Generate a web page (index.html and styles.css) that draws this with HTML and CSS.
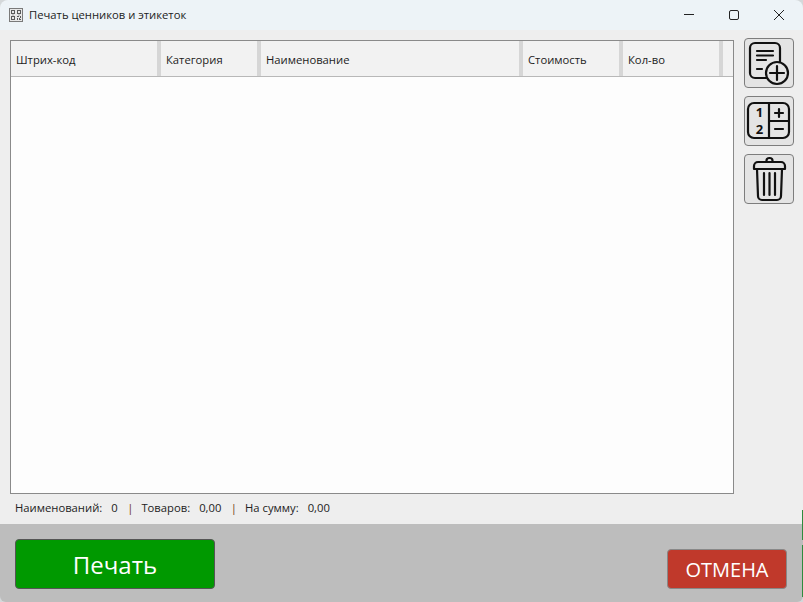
FILE: index.html
```html
<!DOCTYPE html>
<html>
<head>
    <title>Печать ценников и этикеток</title>
    <link rel="stylesheet" href="styles.css">
</head>
<body>
    <div class="window">
        <div class="titlebar">
            <svg class="app-icon" width="14" height="14" viewBox="0 0 14 14">
                <rect x="0.500" y="0.500" width="13" height="13" fill="#e8e8e8" stroke="#7a7a7a"/>
                <path d="M2 2h4v1h-4zM2 3h1v2h-1zM5 3h1v2h-1zM2 5h4v1h-4zM8 2h4v1h-4zM8 3h1v2h-1zM11 3h1v2h-1zM8 5h4v1h-4zM2 8h4v1h-4zM2 9h1v2h-1zM5 9h1v2h-1zM2 11h4v1h-4zM8 8h2v1h-2zM11 8h1v2h-1zM8 10h1v2h-1zM10 10h1v1h-1zM10 11h2v1h-2zM3.500 6.500h1v1h-1zM9.500 6.500h1v1h-1z" fill="#5a5a5a"/>
            </svg>
            <span class="title">Печать ценников и этикеток</span>
            <div class="win-buttons">
                <svg width="12" height="12" viewBox="0 0 12 12"><path d="M1 5.500h10" stroke="#222" fill="none"/></svg>
                <svg width="12" height="12" viewBox="0 0 12 12"><rect x="1.500" y="1.500" width="9" height="9" rx="1.500" stroke="#222" fill="none"/></svg>
                <svg width="12" height="12" viewBox="0 0 12 12"><path d="M1 1l10 10M11 1l-10 10" stroke="#222" fill="none"/></svg>
            </div>
        </div>

        <div class="content">
            <div class="main-row">
                <div class="table">
                    <div class="table-head">
                        <div class="col col-code">Штрих-код</div>
                        <div class="col col-cat">Категория</div>
                        <div class="col col-name">Наименование</div>
                        <div class="col col-cost">Стоимость</div>
                        <div class="col col-qty">Кол-во</div>
                    </div>
                    <div class="table-body"></div>
                </div>
                <div class="tools">
                    <button class="tool">
                        <svg width="48" height="48" viewBox="1 1 48 48" fill="none" stroke="#111" stroke-width="2.200" stroke-linecap="round">
                            <path d="M22 40H11a5 5 0 0 1-5-5V10a5 5 0 0 1 5-5h20a5 5 0 0 1 5 5v14"/>
                            <path d="M13 13h16M13 17.500h16M13 22h9M13 31h5"/>
                            <circle cx="33" cy="35" r="11"/>
                            <path d="M33 28v14M26 35h14"/>
                        </svg>
                    </button>
                    <button class="tool">
                        <svg width="48" height="48" viewBox="1 1 48 48" fill="none" stroke="#111" stroke-width="2.200" stroke-linecap="round">
                            <rect x="4" y="7" width="41" height="35" rx="6"/>
                            <path d="M25 7v35M25 25h20"/>
                            <path d="M31 17h8M35 13v8M31 33h8"/>
                            <text class="digit" x="15.500" y="21">1</text>
                            <text class="digit" x="15.500" y="38">2</text>
                        </svg>
                    </button>
                    <button class="tool">
                        <svg width="48" height="48" viewBox="1 1 48 48" fill="none" stroke="#111" stroke-width="2.200" stroke-linecap="round" stroke-linejoin="round">
                            <path d="M10 15v-3a4 4 0 0 1 4-4h23a4 4 0 0 1 4 4v3z"/>
                            <path d="M22.500 8V6.500a3 2.500 0 0 1 6 0V8"/>
                            <path d="M13 15l1 27a4 4 0 0 0 4 4h15a4 4 0 0 0 4-4l1-27"/>
                            <path d="M20 19v22M25.500 19v22M31 19v22"/>
                        </svg>
                    </button>
                </div>
            </div>
            <div class="status">
                <span>Наименований:</span><span class="val">0</span>
                <span class="sep">|</span>
                <span>Товаров:</span><span class="val">0,00</span>
                <span class="sep">|</span>
                <span>На сумму:</span><span class="val">0,00</span>
            </div>
        </div>

        <div class="footer">
            <button class="btn-print">Печать</button>
            <button class="btn-cancel">ОТМЕНА</button>
        </div>
    </div>
    <div class="desktop-edge"></div>
</body>
</html>
```
FILE: styles.css
```css
html, body { margin: 0; height: 100%; background: #d4d8da; }
body { font-family: "Open Sans", "Noto Sans", sans-serif; font-size: 11.25px; color: #222; }
button { font-family: inherit; cursor: pointer; padding: 0; }

.window { height: 602px; width: 803px; display: flex; flex-direction: column; overflow: hidden; border-radius: 8px 8px 6px 6px; }

.titlebar { height: 30px; background: #edf3f7; display: flex; align-items: center; padding-left: 9px; flex-shrink: 0; }
.app-icon { margin-right: 6px; }
.title { color: #1c1c1c; padding-bottom: 2px; }
.win-buttons { margin-left: auto; display: flex; gap: 33px; padding-right: 18px; }

.content { flex: 1; background: #eeeeee; display: flex; flex-direction: column; padding: 10px 9px 0 10px; min-height: 0; }
.main-row { display: flex; gap: 10px; height: 454px; }

.table { width: 724px; box-sizing: border-box; border: 1px solid #8a8a8a; background: #fdfdfd; display: flex; flex-direction: column; }
.table-head { height: 36px; box-sizing: border-box; background: #f2f2f2; border-bottom: 1px solid #b8b8b8; display: flex; flex-shrink: 0; }
.col { box-sizing: border-box; border-right: 4px solid #d6d6d6; display: flex; align-items: center; padding: 2px 0 0 5px; color: #1c1c1c; }
.col-code { width: 150px; }
.col-cat { width: 100px; }
.col-name { width: 262px; }
.col-cost { width: 100px; }
.col-qty { width: 100px; }
.table-body { flex: 1; }

.tools { display: flex; flex-direction: column; gap: 8px; margin-top: -2px; }
.tool { width: 50px; height: 50px; box-sizing: border-box; background: #e4e4e4; border: 1px solid #7d7d7d; border-radius: 4px; display: flex; align-items: center; justify-content: center; }
.digit { font-size: 13px; font-weight: 700; fill: #111; stroke: none; text-anchor: middle; }

.status { height: 27px; display: flex; align-items: center; padding-left: 5px; color: #222; }
.val { margin-left: 9px; }
.sep { margin: 0 8px 0 9.500px; color: #6e3a14; }

.footer { height: 78px; box-sizing: border-box; background: #bdbdbd; display: flex; justify-content: space-between; align-items: flex-end; padding: 0 16px 13px 15px; flex-shrink: 0; }
.btn-print { width: 200px; height: 50px; background: #009900; color: #fff; border: 1px solid #555; border-radius: 4px; font-size: 24px; }
.btn-cancel { width: 120px; height: 40px; background: #c0392b; color: #fff; border: 1px solid #888; border-radius: 4px; font-size: 20px; }

.desktop-edge { position: absolute; top: 510px; right: 0; width: 1px; height: 87px; background: linear-gradient(#2e8b3e 0 30px, #bdbdbd 30px 35px, #2e8b3e 35px); }
```
